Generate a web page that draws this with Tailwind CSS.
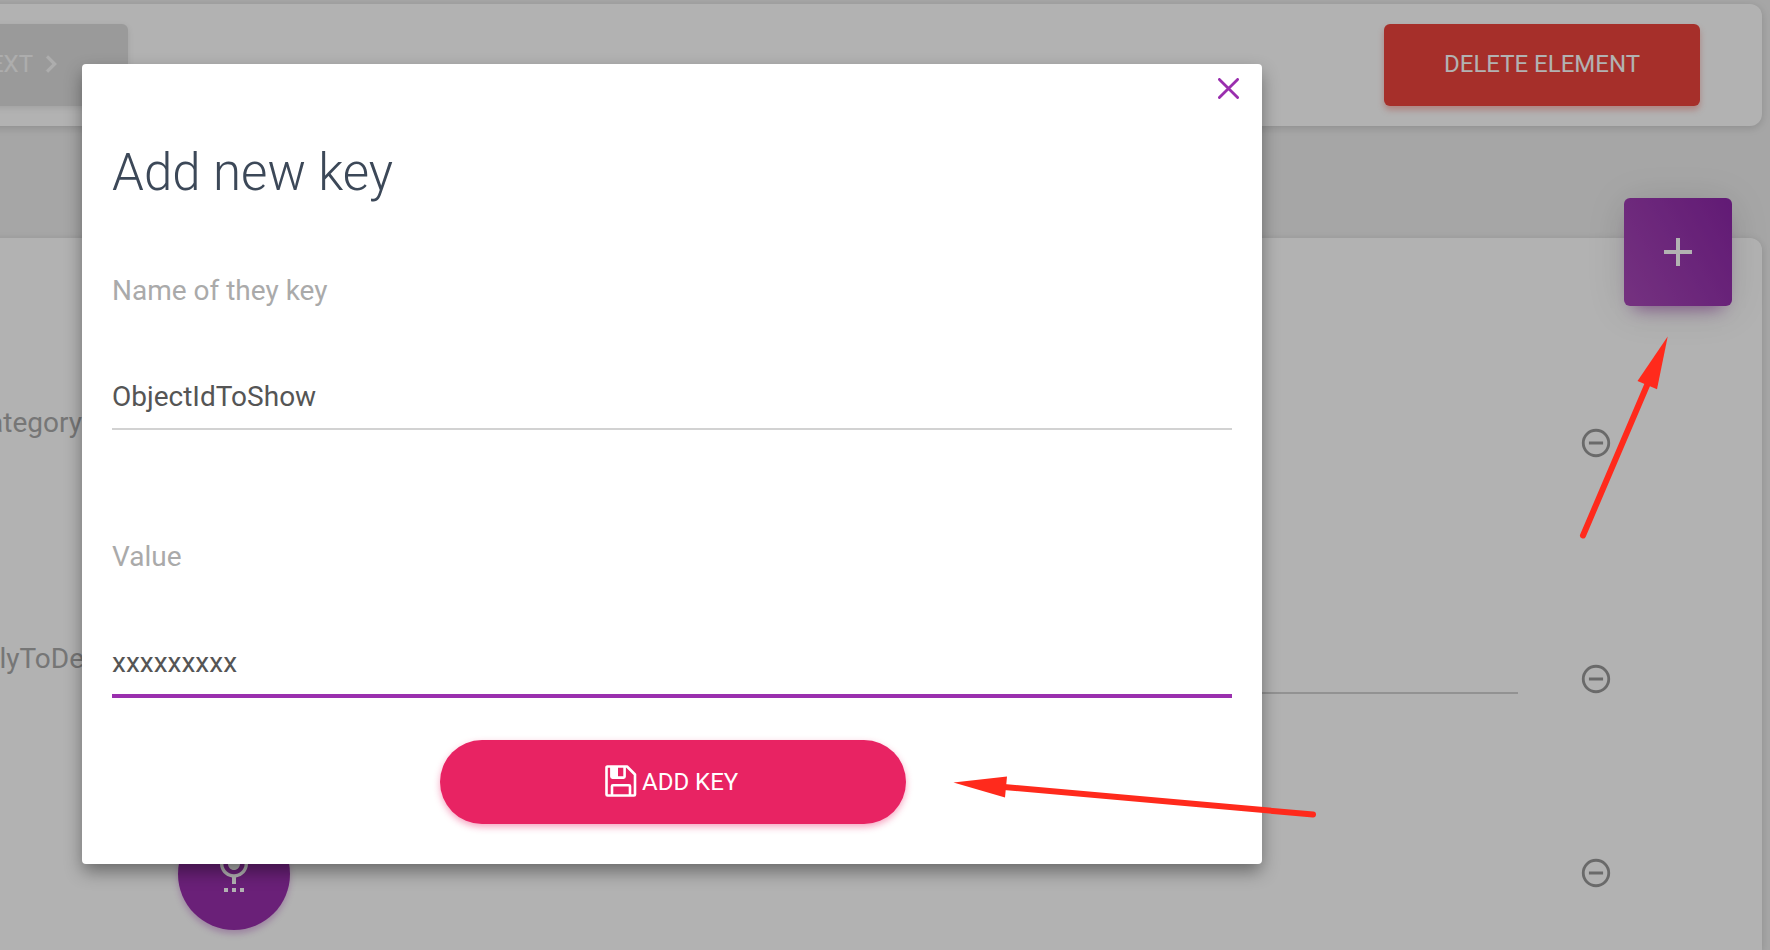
<!DOCTYPE html>
<html lang="en">
<head>
<meta charset="utf-8">
<title>Add new key</title>
<script src="https://cdn.jsdelivr.net/npm/@tailwindcss/browser@4"></script>
</head>
<body class="relative h-[950px] w-[1770px] overflow-hidden bg-[#eeeeee] font-[Roboto,sans-serif]">

<!-- Page behind the dialog -->
<main class="-ml-5 flex h-[950px] w-[1790px] flex-col overflow-hidden pt-1 pr-2">
  <section class="flex h-[122px] shrink-0 items-center justify-between rounded-r-[12px] bg-white pr-[62px] shadow-[0_2px_8px_rgba(0,0,0,0.15)]">
    <button class="flex h-[82px] w-[148px] items-center justify-end rounded-r-md bg-[#dddddd] pr-[72px] pb-[3px] text-2xl text-white/80 shadow-[0_2px_6px_rgba(0,0,0,0.1)]">
      <span>NEXT</span>
      <svg class="-mr-3 ml-px size-[34px] shrink-0" viewBox="0 0 24 24" fill="currentColor" stroke="currentColor" stroke-width=".3"><path d="M8.59 16.59 13.17 12 8.59 7.41 10 6l6 6-6 6z"/></svg>
    </button>
    <button class="h-[82px] w-[316px] rounded-md bg-[#ee443d] pb-[2px] text-2xl text-white shadow-[0_4px_6px_rgba(244,67,54,0.35)]">DELETE ELEMENT</button>
  </section>

  <section class="mt-28 flex h-[712px] shrink-0 flex-col rounded-tr-[12px] bg-white shadow-[0_2px_8px_rgba(0,0,0,0.15)]">
    <div class="-mt-10 flex justify-end pr-[30px]">
      <button class="grid size-[108px] place-items-center rounded-md bg-linear-[60deg,#a848b8,#8c26a8] text-white shadow-[0_4px_40px_-2px_rgba(0,0,0,0.14),0_12px_16px_-10px_rgba(156,39,176,0.6)]">
        <svg class="size-12" viewBox="0 0 24 24" fill="currentColor"><path d="M19 13h-6v6h-2v-6H5v-2h6V5h2v6h6z"/></svg>
      </button>
    </div>
    <div class="mt-[92px] flex h-[90px] items-center justify-between pr-[149px]">
      <span class="-mt-10 flex w-[102px] justify-end text-[28px] text-[#aaaaaa]">ategory</span>
      <svg class="size-[34px]" viewBox="0 0 24 24" fill="#999"><path d="M7 11v2h10v-2zm5-9a10 10 0 1 0 0 20 10 10 0 0 0 0-20zm0 18a8 8 0 1 1 0-16 8 8 0 0 1 0 16z"/></svg>
    </div>
    <div class="mt-[146px] flex h-[90px] items-center pr-[149px]">
      <span class="-mt-10 flex w-[104px] justify-end text-[28px] text-[#aaaaaa]">lyToDe</span>
      <div class="mt-[28px] h-[2px] flex-1 bg-[#d2d2d2]"></div>
      <svg class="ml-[61px] size-[34px]" viewBox="0 0 24 24" fill="#999"><path d="M7 11v2h10v-2zm5-9a10 10 0 1 0 0 20 10 10 0 0 0 0-20zm0 18a8 8 0 1 1 0-16 8 8 0 0 1 0 16z"/></svg>
    </div>
    <div class="mt-[93px] flex h-[114px] items-center justify-between pr-[149px] pl-[198px]">
      <button class="flex size-28 justify-center rounded-full bg-[#992fac] pt-[26px] text-white shadow-[0_4px_6px_rgba(156,39,176,0.3)]">
        <svg class="size-12" viewBox="0 0 24 24" fill="currentColor"><path d="M12 13c1.66 0 2.99-1.34 2.99-3L15 4c0-1.66-1.34-3-3-3S9 2.34 9 4v6c0 1.66 1.34 3 3 3zm-1 11h2v-2h-2v2zm-4 0h2v-2H7v2zm8 0h2v-2h-2v2zm4-14h-1.7c0 3-2.54 5.1-5.3 5.1S6.7 13 6.7 10H5c0 3.41 2.72 6.23 6 6.72V20h2v-3.28c3.28-.49 6-3.31 6-6.72z"/></svg>
      </button>
      <svg class="mb-[2px] size-[34px]" viewBox="0 0 24 24" fill="#999"><path d="M7 11v2h10v-2zm5-9a10 10 0 1 0 0 20 10 10 0 0 0 0-20zm0 18a8 8 0 1 1 0-16 8 8 0 0 1 0 16z"/></svg>
    </div>
  </section>
</main>

<!-- Backdrop and dialog -->
<div class="absolute inset-0 bg-black/30 pt-16 pl-[82px]">
  <div class="flex h-[800px] w-[1180px] flex-col rounded bg-white px-[30px] shadow-[0_8px_18px_-1px_rgba(0,0,0,0.42)]">
    <button class="mt-[14px] -mr-[7px] self-end">
      <svg class="size-[21px]" viewBox="0 0 21 21" fill="none" stroke="#9a2fae" stroke-width="2.8" stroke-linecap="round"><path d="M1.4 1.4 19.6 19.6M19.6 1.4 1.4 19.6"/></svg>
    </button>
    <h1 class="mt-[38px] h-[72px] text-[51px] leading-[72px] font-light text-[#3c4858]">Add new key</h1>
    <label class="mt-[62px] h-10 text-[28px] leading-10 text-[#aaaaaa]">Name of they key</label>
    <div class="mt-[66px] h-[53px] border-b-2 border-[#d2d2d2] text-[28px] leading-10 text-[#555555]">ObjectIdToShow</div>
    <label class="mt-[107px] h-10 text-[28px] leading-10 text-[#aaaaaa]">Value</label>
    <div class="mt-[66px] h-[55px] border-b-4 border-[#9a2fae] text-[28px] leading-10 text-[#555555]">xxxxxxxxx</div>
    <button class="mt-[42px] ml-[328px] flex h-[84px] w-[466px] items-center rounded-full bg-[#e82363] pl-[165px] text-2xl text-white shadow-[0_3px_7px_rgba(233,30,99,0.4)]">
      <svg class="mr-[5px] -mt-[2px] size-8" viewBox="0 0 32 32" fill="none" stroke="currentColor" stroke-width="2.6" stroke-linejoin="round"><path d="M2.3 1.5H22L30 9.5V29.5a1 1 0 0 1-1 1H2.5a1 1 0 0 1-1-1V2.5a1 1 0 0 1 1-1z"/><path d="M7 30V21.3a1 1 0 0 1 1-1H24a1 1 0 0 1 1 1V30"/><path d="M6.4 1.5V11.6a1 1 0 0 0 1 1H18.6a1 1 0 0 0 1-1V1.5"/><path d="M6 1h7v11H6z" fill="currentColor" stroke="none"/></svg>
      <span>ADD KEY</span>
    </button>
  </div>
</div>

<!-- Annotation arrows -->
<svg class="absolute inset-0 h-[950px] w-[1770px]" viewBox="0 0 1770 950" fill="#ff2a1c">
  <path d="M1583 535.5 1648 383" stroke="#ff2a1c" stroke-width="6" stroke-linecap="round"/>
  <path d="M1667.7 336.5 1657 389.3 1637.5 381z"/>
  <path d="M1313 814.5 1004 787" stroke="#ff2a1c" stroke-width="6" stroke-linecap="round"/>
  <path d="M953.5 782.5 1007 776.5 1005 797.5z"/>
</svg>
</body>
</html>
